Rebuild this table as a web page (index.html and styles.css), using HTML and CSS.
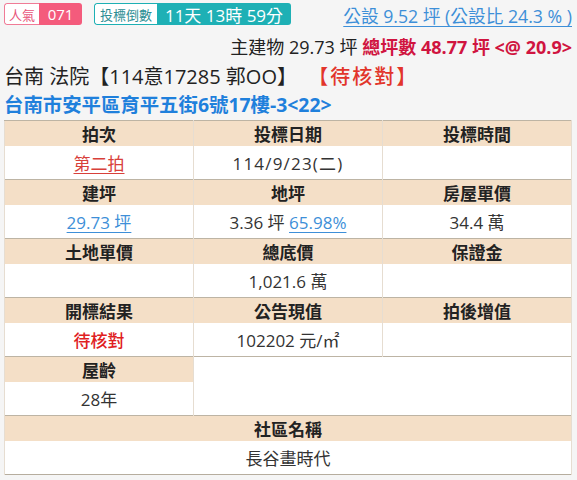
FILE: index.html
```html
<!DOCTYPE html>
<html lang="zh-Hant">
<head>
<meta charset="utf-8">
<link rel="stylesheet" href="styles.css">
</head>
<body>
<div class="top">
  <div class="badges">
    <span class="badge pop"><span class="b-label">人氣</span><span class="b-val">071</span></span>
    <span class="badge cd"><span class="b-label">投標倒數</span><span class="b-val">11天 13時 59分</span></span>
  </div>
  <a class="share" href="#">公設 9.52 坪 (公設比 24.3 % )</a>
</div>
<div class="line2">主建物 29.73 坪 <b class="red">總坪數 48.77 坪 &lt;@ 20.9&gt;</b></div>
<div class="title">台南 法院【114意17285 郭OO】 <span class="status">【待核對】</span></div>
<div class="addr">台南市安平區育平五街6號17樓-3&lt;22&gt;</div>
<table class="info">
  <tr class="hd"><th>拍次</th><th>投標日期</th><th>投標時間</th></tr>
  <tr class="vl"><td><a class="rlink" href="#">第二拍</a></td><td class="date">114/9/23(二)</td><td></td></tr>
  <tr class="hd"><th>建坪</th><th>地坪</th><th>房屋單價</th></tr>
  <tr class="vl"><td><a class="blink" href="#">29.73 坪</a></td><td>3.36 坪 <a class="blink" href="#">65.98%</a></td><td>34.4 萬</td></tr>
  <tr class="hd"><th>土地單價</th><th>總底價</th><th>保證金</th></tr>
  <tr class="vl"><td></td><td>1,021.6 萬</td><td></td></tr>
  <tr class="hd"><th>開標結果</th><th>公告現值</th><th>拍後增值</th></tr>
  <tr class="vl"><td class="pending">待核對</td><td>102202 元/㎡</td><td></td></tr>
  <tr class="hd"><th>屋齡</th><td class="blank" colspan="2" rowspan="2"></td></tr>
  <tr class="vl"><td>28年</td></tr>
  <tr class="hd"><th colspan="3">社區名稱</th></tr>
  <tr class="vl"><td colspan="3">長谷畫時代</td></tr>
</table>
</body>
</html>
```
FILE: styles.css
```css
html, body {
  margin: 0;
  background: #f5f5f5;
}
body {
  padding: 3px 5px 0 4px;
  font-family: "Open Sans", "Noto Sans CJK TC", sans-serif;
  color: #333;
  width: 568px;
}
.top {
  display: flex;
  justify-content: space-between;
  align-items: flex-start;
  height: 27px;
}
.badges {
  display: flex;
  gap: 12px;
}
.badge {
  display: flex;
  height: 22px;
  border-radius: 3px;
  overflow: hidden;
  box-sizing: border-box;
}
.b-label {
  display: flex;
  align-items: center;
  justify-content: center;
  background: #fff;
  font-size: 13px;
  padding: 0;
  box-sizing: border-box;
  border-radius: 3px 0 0 3px;
  white-space: nowrap;
}
.b-val {
  display: flex;
  align-items: center;
  justify-content: center;
  color: #fff;
  box-sizing: border-box;
  white-space: nowrap;
}
.pop .b-label {
  color: #e8547a;
  border: 1px solid #f07b96;
  border-right: none;
  width: 35px;
}
.pop .b-val {
  background: #f45b7c;
  font-size: 15px;
  width: 43px;
}
.cd .b-label {
  color: #2d8e94;
  border: 1px solid #1db0b4;
  border-right: none;
  width: 63px;
}
.cd .b-val {
  background: #1eb0b5;
  font-size: 17px;
  width: 134px;
}
.share {
  color: #3d8fd8;
  font-size: 17.7px;
  line-height: 24px;
  text-decoration: underline;
  text-underline-offset: 3px;
  margin-top: 1px;
}
.line2 {
  text-align: right;
  font-size: 18px;
  line-height: 26px;
  color: #222;
  margin-top: 4px;
}
.red {
  color: #d01440;
  font-weight: bold;
}
.title {
  font-size: 20px;
  line-height: 30px;
  color: #222;
  margin-top: 2px;
}
.status {
  color: #e2352b;
  font-weight: 500;
  letter-spacing: 2px;
  margin-left: 6px;
}
.addr {
  font-size: 19.4px;
  line-height: 26px;
  color: #1f80dc;
  font-weight: bold;
}
.info {
  margin-top: 2px;
  width: 568px;
  border-collapse: collapse;
  table-layout: fixed;
  border: 1px solid #b6ad9e;
  background: #fff;
}
.info th, .info td {
  text-align: center;
  padding: 0;
  font-size: 17px;
  border-left: 1px solid #e6ddd1;
  border-right: 1px solid #e6ddd1;
}
.info tr.hd > th {
  background: #f4dfc7;
  color: #222;
  font-weight: bold;
  height: 24px;
  border-top: 1px solid #bdb4a4;
}
.info tr.hd > td.blank {
  background: #fff;
  border-top: 1px solid #bdb4a4;
}
.info tr.vl > td {
  height: 33px;
  color: #333;
}
.info tr.vl > td.date {
  letter-spacing: 1.2px;
}
.rlink {
  color: #d8403a;
  text-decoration: underline;
  text-underline-offset: 3px;
}
.blink {
  color: #3d8fd8;
  text-decoration: underline;
  text-underline-offset: 3px;
}
.info tr.vl > td.pending {
  color: #e0201e;
  font-weight: 500;
}
```
